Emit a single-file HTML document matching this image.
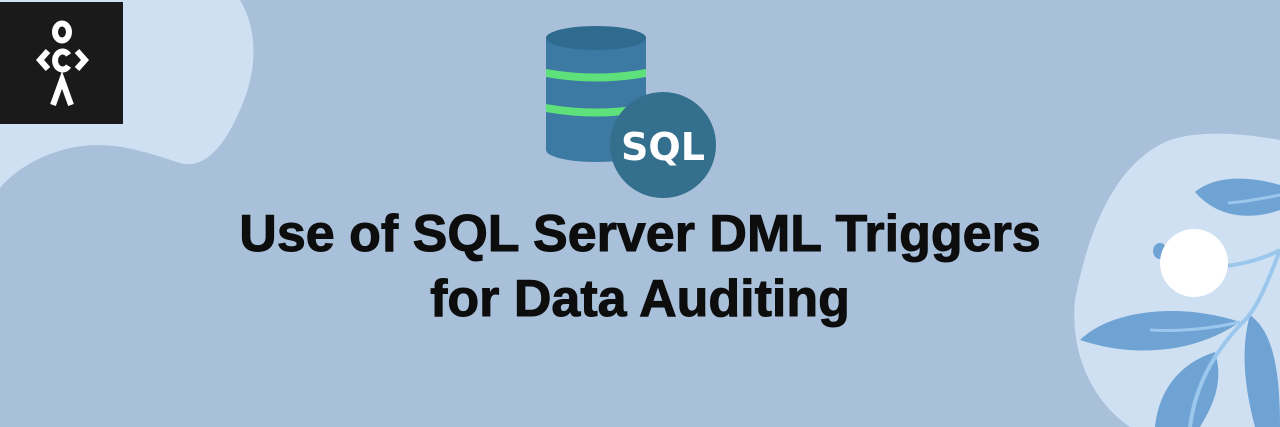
<!DOCTYPE html>
<html><head><meta charset="utf-8"><style>
html,body{margin:0;padding:0}
body{width:1280px;height:427px;overflow:hidden;background:#a8c0da;position:relative;font-family:"Liberation Sans",sans-serif}
svg{position:absolute;left:0;top:0}
.t{position:absolute;left:0;width:1280px;text-align:center;font-weight:bold;font-size:52px;line-height:60px;color:#0d0d0d;letter-spacing:0px;-webkit-text-stroke:1px #0d0d0d}
</style></head><body>
<svg width="1280" height="427" viewBox="0 0 1280 427">
<path d="M0 0 H240 C258 30 258 70 240 110 C225 145 205 170 180 163 C140 150 110 140 70 148 C40 155 15 170 0 188 Z" fill="#cfe0f2"/>
<path d="M1280 140 C1240 133 1200 130 1170 140 C1120 160 1090 220 1075 300 C1070 350 1090 400 1130 427 H1280 Z" fill="#cfe0f2"/>
<path d="M1195 192 C1215 175 1250 176 1280 185 V210 C1245 222 1215 215 1195 192 Z" fill="#6fa3d4"/>
<path d="M1228 203 C1245 202 1265 198 1280 195" stroke="#9cc7ec" stroke-width="3" fill="none"/>
<path d="M1080 340 C1110 310 1180 302 1240 322 C1200 350 1140 360 1080 340 Z" fill="#6fa3d4"/>
<path d="M1150 330 C1180 332 1215 328 1240 322" stroke="#9cc7ec" stroke-width="3" fill="none"/>
<path d="M1155 427 C1160 380 1190 360 1215 352 C1225 385 1210 410 1200 427 Z" fill="#6fa3d4"/>
<path d="M1250 315 C1270 330 1280 360 1280 427 H1255 C1245 390 1240 350 1250 315 Z" fill="#6fa3d4"/>
<path d="M1280 250 C1265 290 1255 310 1245 320 C1215 350 1195 385 1190 427" stroke="#9cc7ec" stroke-width="4" fill="none"/>
<path d="M1225 266 C1245 264 1265 258 1280 250" stroke="#9cc7ec" stroke-width="4" fill="none"/>
<ellipse cx="1160" cy="251" rx="7" ry="8" fill="#6fa3d4"/>
<circle cx="1194" cy="263" r="34" fill="#ffffff"/>
<rect x="0" y="2" width="123" height="122" fill="#1a1a1a"/>
<g fill="none" stroke="#fff" stroke-width="6">
<ellipse cx="62" cy="32" rx="7" ry="8.5"/>
<path d="M48 51 L40 60 L48 69"/>
<path d="M77 51 L85 60 L77 69"/>
<path d="M68.5 55 A7.5 9 0 1 0 68.5 66"/>
<path d="M53 105 L62 80 L71 105"/>
</g>
<rect x="546" y="38" width="100" height="112" fill="#3d7aa3"/>
<ellipse cx="596" cy="150" rx="50" ry="12" fill="#3d7aa3"/>
<path d="M546 69 Q596 78 646 69 V77 Q596 86 546 77 Z" fill="#5ee07a"/>
<path d="M546 104 Q596 113 646 104 V112 Q596 121 546 112 Z" fill="#5ee07a"/>
<ellipse cx="596" cy="38" rx="50" ry="12" fill="#2f6a8f"/>
<circle cx="663" cy="145" r="53" fill="#346f8e"/>
<text x="663" y="160" text-anchor="middle" font-family="DejaVu Sans, sans-serif" font-weight="bold" font-size="38" fill="#fff">SQL</text>
</svg>
<div class="t" style="top:204px">Use of SQL Server DML Triggers</div>
<div class="t" style="top:269px">for Data Auditing</div>
</body></html>
